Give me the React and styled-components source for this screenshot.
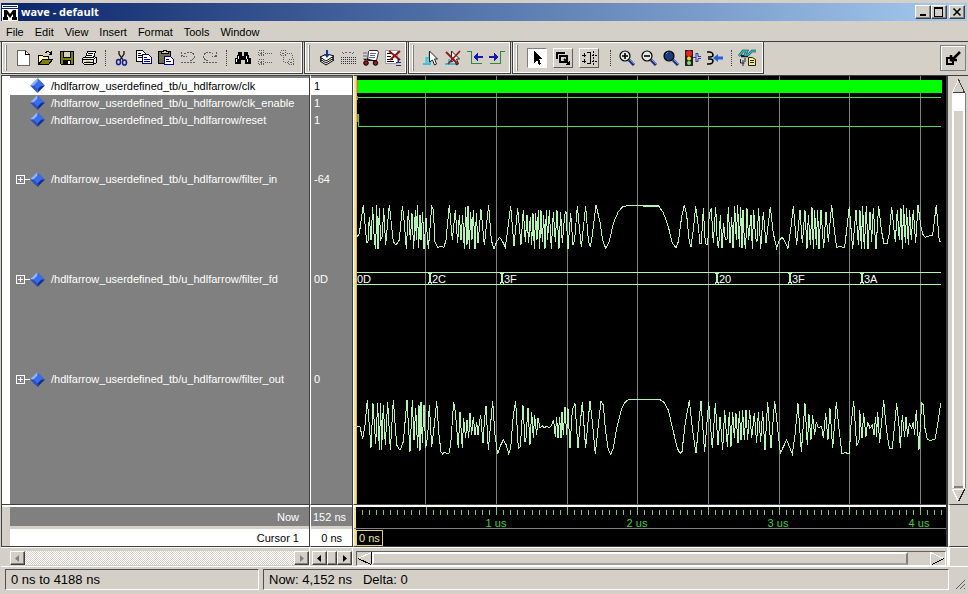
import React, { useState } from 'react'
import styled, { createGlobalStyle } from 'styled-components'

const GlobalStyle = createGlobalStyle`
    * { box-sizing: border-box; }
    body {
        margin: 0;
        background: #d4d0c8;
        font-family: "Liberation Sans", Arial, sans-serif;
        font-size: 12px;
        color: #000;
    }
    button { font: inherit; color: inherit; }
    svg { display: block; }
`;

const Window = styled.div`
    min-height: 100vh;
    display: flex;
    flex-direction: column;
    background: #d4d0c8;
`;

/* ---- title bar and menu ---- */

const TitleBar = styled.header`
    height: 18px;
    margin: 3px 1px 1px 1px;
    padding: 0 2px 0 1px;
    display: flex;
    align-items: center;
    background: linear-gradient(90deg, #0a246a, #a6caf0);
`;

const Title = styled.h1`
    margin: 0 auto 0 3px;
    font-family: "Open Sans", "Noto Sans", sans-serif;
    font-size: 11px;
    line-height: 16px;
    font-weight: 700;
    color: #fff;
`;

const raised = `
    background: #d4d0c8;
    border: 1px solid;
    border-color: #fff #404040 #404040 #fff;
    box-shadow: inset -1px -1px #808080;
`;

const CaptionButton = styled.button`
    ${raised}
    width: 16px;
    height: 14px;
    padding: 0;
    margin-left: ${({ $gap }) => ($gap ? '2px' : '0')};
    display: grid;
    place-items: center;
`;

const MenuBar = styled.nav`
    height: 19px;
    padding-left: 6px;
    display: flex;
    gap: 11px;
`;

const MenuItem = styled.button`
    padding: 0;
    border: 0;
    background: none;
    font-size: 11px;
    line-height: 18px;
`;

/* ---- toolbar ---- */

const Toolbar = styled.div`
    height: 34px;
    padding-left: 1px;
    display: flex;
    border-top: 1px solid #404040;
    border-bottom: 1px solid #d4d0c8;
`;

const ToolGroup = styled.div`
    height: 32px;
    padding: 0 ${({ $end }) => $end || 2}px 0 3px;
    display: flex;
    align-items: center;
    border: 1px solid #404040;
    border-top: 0;
    box-shadow: inset 1px 1px #fff, inset -1px -1px #fff;
    margin-right: 1px;
`;

const Grip = styled.span`
    width: 2px;
    height: 26px;
    margin-right: ${({ $space }) => $space || 5}px;
    border-left: 1px solid #fff;
    border-right: 1px solid #808080;
`;

const Separator = styled.span`
    height: 16px;
    margin: 0 5px;
    border-left: 1px dotted #404040;
`;

const ToolButton = styled.button`
    width: 22px;
    height: 22px;
    padding: 0;
    border: 0;
    background: none;
    display: grid;
    place-items: center;
`;

const ModeButton = styled.button`
    width: 20px;
    height: 20px;
    margin-right: 6px;
    padding: 0;
    display: grid;
    place-items: center;
    background: ${({ $on }) => ($on ? '#fff' : '#d4d0c8')};
    border: 1px solid;
    border-color: ${({ $on }) => ($on ? '#808080 #fff #fff #808080' : '#fff #606060 #606060 #fff')};
`;

const DockButton = styled.button`
    width: 26px;
    height: 26px;
    margin: 3px 2px 0 auto;
    padding: 0;
    display: grid;
    place-items: center;
    background: #d4d0c8;
    border: 1px solid #808080;
    box-shadow: inset 1px 1px #fff;
`;

/* ---- main area ---- */

const Main = styled.main`
    flex: 1;
    display: grid;
    grid-template-columns: 309px 43px 1fr 20px;
    grid-template-rows: 1fr 43px 20px;
    padding-left: 1px;
`;

const Pane = styled.div`
    min-width: 0;
    overflow: hidden;
    display: flex;
    flex-direction: column;
    background: #808080;
    border-top: 1px solid #404040;
    border-right: 1px solid #404040;
    border-left: 1px solid ${({ $first }) => ($first ? '#404040' : '#fff')};
`;

const NamesPane = styled(Pane)`
    border-left: 1px solid #404040;
    box-shadow: inset 8px 0 #fff;
    padding-left: 8px;
`;

const List = styled.ul`
    margin: 0;
    padding: 2px 0 0;
    list-style: none;
`;

const SignalRow = styled.li`
    height: ${({ $tall }) => ($tall ? 100 : 17)}px;
    padding-bottom: ${({ $tall }) => ($tall ? 0 : 2)}px;
    display: flex;
    align-items: center;
    white-space: nowrap;
    font-size: 11px;
    line-height: 12px;
    color: ${({ $selected }) => ($selected ? '#000' : '#fff')};
    background: ${({ $selected }) => ($selected ? '#fff' : 'none')};
`;

const Expander = styled.button`
    width: 15px;
    height: 15px;
    margin-left: 5px;
    padding: 0;
    border: 0;
    background: none;
    visibility: ${({ $show }) => ($show ? 'visible' : 'hidden')};
`;

const SignalName = styled.span`
    margin-left: 6px;
`;

const ValueRow = styled(SignalRow)`
    padding-left: 3px;
`;

const WavePane = styled(Pane)`
    background: #000;
    border-right: 2px solid #404040;
    position: relative;
`;

const CursorLine = styled.div`
    position: absolute;
    left: 0;
    top: 0;
    bottom: 0;
    width: 3px;
    background: #f0e090;
    border-right: 1px solid #d8b850;
`;

const FooterPane = styled(Pane)`
    background: #d4d0c8;
    box-shadow: inset 0 2px #fff;
    padding-top: 2px;
    padding-left: ${({ $first }) => ($first ? 8 : 0)}px;
    border-bottom: 1px solid #404040;
`;

const FooterCell = styled.div`
    height: ${({ $white }) => ($white ? 17 : 19)}px;
    margin-bottom: 3px;
    padding-right: ${({ $tight }) => ($tight ? 6 : 10)}px;
    display: flex;
    flex: none;
    align-items: center;
    justify-content: flex-end;
    white-space: nowrap;
    font-size: 11px;
    color: ${({ $white }) => ($white ? '#000' : '#fff')};
    background: ${({ $white }) => ($white ? '#fff' : '#808080')};
`;

const TimePane = styled(Pane)`
    background: #000;
    border-right: 2px solid #404040;
    border-bottom: 1px solid #404040;
    box-shadow: inset 0 2px #fff, inset 2px 0 #f0e090;
    padding-top: 2px;
`;

const Ruler = styled.svg`
    width: 100%;
    height: 22px;
    flex: none;
    border-bottom: 1px solid #808080;
`;

const CursorRow = styled.div`
    height: 17px;
    padding: 1px 0 0 2px;
    display: flex;
`;

const CursorTime = styled.output`
    height: 16px;
    padding: 0 2px;
    border: 1px solid #e0d070;
    font-size: 11px;
    line-height: 14px;
    color: #f0e8a0;
`;

/* ---- scroll bars ---- */

const ScrollCell = styled.div`
    display: flex;
    align-items: flex-start;
    height: 20px;
    padding: 3px ${({ $right }) => $right || 0}px 0 ${({ $left }) => $left || 0}px;
    border-top: 1px solid #fff;
    border-right: 1px solid #fff;
    border-bottom: 1px solid #fff;
`;

const ScrollButton = styled.button`
    ${raised}
    width: 15px;
    height: 14px;
    flex: none;
    padding: 0;
    display: grid;
    place-items: center;
    color: ${({ disabled }) => (disabled ? '#808080' : '#000')};
`;

const Track = styled.div`
    flex: 1;
    height: 14px;
    background: repeating-conic-gradient(#fff 0 25%, #d4d0c8 0 50%) 0 0 / 2px 2px;
`;

const Thumb = styled.div`
    ${raised}
    flex: 1;
    height: 14px;
`;

const FlatTrack = styled.div`
    flex: 1;
    height: 15px;
    display: flex;
    border: 1px solid #808080;
    border-color: #606060 #fff #fff #606060;
    background: #d4d0c8;
`;

const FlatArrow = styled.button`
    flex: none;
    padding: 0;
    border: 0;
    background: none;
`;

const FlatThumb = styled.div`
    flex: 1;
    margin-right: 22px;
    border: 2px solid;
    border-color: #fff #808080 #a0a0a0 #fff;
`;

const SideScroll = styled.div`
    display: flex;
    flex-direction: column;
    align-items: center;
    padding: 2px 1px 1px 2px;
    border-top: 1px solid #404040;
`;

const SideTrack = styled.div`
    flex: 1;
    width: 14px;
    padding-top: 18px;
    background: #fff;
    display: flex;
    justify-content: center;
    border-right: 1px solid #808080;
`;

const SideThumb = styled.div`
    width: 9px;
    background: #d4d0c8;
    border-bottom: 2px solid #808080;
`;

const SideCell = styled.div`
    border-top: ${({ $line }) => ($line ? '1px solid #404040' : '1px solid #fff')};
    border-bottom: 1px solid ${({ $line }) => ($line ? '#404040' : '#fff')};
    border-left: 2px solid #fff;
`;

/* ---- status bar ---- */

const StatusBar = styled.footer`
    height: 27px;
    padding: 2px 2px 4px 5px;
    display: flex;
    align-items: stretch;
    gap: 4px;
`;

const StatusField = styled.div`
    flex: ${({ $wide }) => ($wide ? '1' : '0 0 254px')};
    padding-left: 5px;
    font-size: 13px;
    line-height: 20px;
    white-space: pre;
    border: 1px solid;
    border-color: #505050 #fff #fff #505050;
`;

/* ---- icons ---- */

const Icon = ({ children, size = 16 }) => (
    <svg width={size} height={size} viewBox={`0 0 ${size} ${size}`} fill="none" stroke="#000" shapeRendering="crispEdges" aria-hidden="true">
        {children}
    </svg>
)

const Lens = ({ fill, children }) => (
    <svg width="16" height="16" viewBox="0 0 16 16" fill="none" aria-hidden="true">
        <path d="M10 10l5 5" stroke="#16307e" strokeWidth="3" />
        <path d="M11 10l4 4" stroke="#7c94dc" />
        <circle cx="6" cy="6" r="5" fill={fill} stroke="#000" strokeWidth="1.2" />
        {children}
    </svg>
)

const icons = {
    new: <Icon><path d="M2.5 .5h8l4 4v11h-12z" fill="#fff" stroke="#666" /><path d="M10.5 .5v4h4" /></Icon>,
    open: (
        <Icon>
            <path d="M1.5 14V5.5h4l1 1h5v3" fill="#ffffa0" />
            <path d="M1.5 14.5l4-5h10l-4 5z" fill="#808000" />
            <path d="M8.5 3c2-3 5-1 5 1m-2 0h3V1" />
        </Icon>
    ),
    save: (
        <Icon>
            <path d="M1.5 1.5h13v13h-12l-1-1z" fill="#808000" />
            <path d="M4.5 1.5h7v6h-7z" fill="#d4d0c8" />
            <path d="M4 10h8v5H4z" fill="#000" stroke="none" />
            <path d="M9 11h2v3H9z" fill="#fff" stroke="none" />
        </Icon>
    ),
    print: (
        <Icon>
            <path d="M1.5 8.5l3-2h8l3 1v5l-3 2h-9l-2-2z" fill="#e8e8e4" />
            <path d="M6.5 1.5h8l-2 6h-8z" fill="#fff" />
            <path d="M7 3.5h5M6 5.5h5M2 9.5h10m0 0l3-2M3 12.5h9M12.5 10v4" />
            <path d="M5 11.5h4" stroke="#c8b800" />
        </Icon>
    ),
    cut: (
        <svg width="16" height="16" viewBox="0 0 16 16" fill="none" aria-hidden="true">
            <path d="M5 1v3l4 6M10 1v3l-4 6" stroke="#111" strokeWidth="1.3" />
            <ellipse cx="4.5" cy="12" rx="2" ry="2.6" stroke="#102090" strokeWidth="1.5" />
            <ellipse cx="10.5" cy="12.5" rx="2" ry="2.6" stroke="#102090" strokeWidth="1.5" />
        </svg>
    ),
    copy: (
        <Icon>
            <path d="M.5 .5h6l3 3v8h-9z" fill="#fff" />
            <path d="M2 3.5h3M2 5.5h5M2 7.5h4" />
            <path d="M6.5 4.5h6l3 3v6h-9z" fill="#fff" stroke="#000080" />
            <path d="M8 7.5h3M8 9.5h6M8 11.5h6" stroke="#000080" />
        </Icon>
    ),
    paste: (
        <Icon>
            <path d="M.5 1.5h12v12H.5z" fill="#707050" />
            <path d="M3.5 3.5v-2h2v-1h3v1h2v2z" fill="#d4d0a0" />
            <path d="M6.5 6.5h6l3 3v5h-9z" fill="#fff" stroke="#000080" />
            <path d="M8 9.5h3M8 11.5h5" stroke="#000080" />
        </Icon>
    ),
    undo: <Icon><path d="M1.5 1.5v5h5M2 6l4-3c3-2 7-1 8 2s-1 5-4 6M1 12.5h14" stroke="#606060" strokeDasharray="2 1" /></Icon>,
    redo: <Icon><path d="M14.5 1.5v5h-5M14 6l-4-3c-3-2-7-1-8 2s1 5 4 6M1 12.5h14" stroke="#606060" strokeDasharray="2 1" /></Icon>,
    find: (
        <Icon>
            <path d="M3 2h4v3H3zM9 2h4v3H9zM2 5h5v4H2zM9 5h5v4H9zM0 8h6v6H0zM10 8h6v6h-6zM6 6h4v4H6z" fill="#000" stroke="none" />
            <path d="M3.5 6v3M1.5 9v3M11.5 6v3M12.5 9v3" stroke="#fff" />
        </Icon>
    ),
    collapse: (
        <Icon>
            <path d="M1.5 .5h5v5h-5zM1.5 9.5h5v5h-5zM8 3.5h8M8 12.5h8" stroke="#606060" strokeDasharray="1 1" />
            <path d="M3 3.5h2M3 12.5h2M4.500 2v3M4.500 11v3" stroke="#606060" />
        </Icon>
    ),
    expand: (
        <Icon>
            <path d="M1.5 .5h5v5h-5zM9.5 9.5h5v5h-5zM8 3.5h5v4M4.5 7v5h4" stroke="#606060" strokeDasharray="1 1" />
            <path d="M3 3.5h2M11 12.5h2" stroke="#606060" />
        </Icon>
    ),
    layers: (
        <svg width="16" height="16" viewBox="0 0 16 16" fill="#fff" stroke="#000" aria-hidden="true">
            <path d="M1 11l7-3 7 2-8 5z" />
            <path d="M1 9l7-3 7 2-8 5z" />
            <path d="M1 7l7-3 7 2-8 5z" />
            <path d="M8 0v6" stroke="#103a90" strokeWidth="2" />
            <path d="M5 4h6L8 8z" fill="#103a90" stroke="none" />
        </svg>
    ),
    grid: (
        <Icon>
            <path d="M1 2l2 2 2-2 2 2 2-2 2 2 2-2 2 2" stroke="#606070" strokeDasharray="1 1" />
            <path d="M0 7.5h16M0 9.5h16M0 11.5h16M0 13.5h16" stroke="#303040" strokeDasharray="1 1" />
        </Icon>
    ),
    run: (
        <svg width="16" height="16" viewBox="0 0 16 16" fill="none" aria-hidden="true">
            <path d="M5.5 1.5l1-1h8l1 2-2 8H4.5z" fill="#fff" stroke="#223" />
            <path d="M7 3.5h6M7 5.5h5M6 7.5h6M0 3h4M0 6h4M0 9h3" stroke="#667" />
            <path d="M1 10l3-1 8 2" stroke="#000" />
            <circle cx="3" cy="13" r="2.3" fill="#a01818" stroke="#000" />
            <circle cx="12.5" cy="13" r="2.3" fill="#a01818" stroke="#000" />
        </svg>
    ),
    stop: (
        <svg width="16" height="16" viewBox="0 0 16 16" fill="none" stroke="#000" aria-hidden="true">
            <path d="M.5 .5h12v13H.5z" fill="#fff" stroke="#99a" />
            <path d="M2 3.500h5M2 6.500h4M2 9.500h6M2 11.500h7" />
            <path d="M4 1l11 9M15 1L5 10" stroke="#8b1010" strokeWidth="2" />
            <path d="M13.500 9v4M11 12.500h5M11 15.500h5" stroke="#203080" />
        </svg>
    ),
    addCursor: (
        <svg width="16" height="16" viewBox="0 0 16 16" fill="none" aria-hidden="true">
            <path d="M0 14h8M3.500 14V8h3M6.500 14V2" stroke="#38c4d8" strokeWidth="2" />
            <path d="M6.500 1v11l3-2 2 5 2-1-2-5h3z" fill="#fff" stroke="#222" />
        </svg>
    ),
    deleteCursor: (
        <svg width="16" height="16" viewBox="0 0 16 16" fill="none" aria-hidden="true">
            <path d="M0 14h12M4 14V9" stroke="#38c4d8" strokeWidth="2" />
            <path d="M6.500 1v11l3-2 2 5 2-1-2-5h3z" fill="#fff" stroke="#222" />
            <path d="M1 2l12 12M15 1L3 14" stroke="#981818" strokeWidth="1.800" />
        </svg>
    ),
    prevEdge: (
        <Icon>
            <path d="M0 1.500h4.500v12H15" stroke="#2c8a3c" />
            <path d="M9 7h7" stroke="#1818b0" strokeWidth="2" />
            <path d="M6 7l5-4v8z" fill="#1818b0" stroke="none" />
        </Icon>
    ),
    nextEdge: (
        <Icon>
            <path d="M1 13.500h10.500v-12H16" stroke="#2c8a3c" />
            <path d="M0 7h6" stroke="#1818b0" strokeWidth="2" />
            <path d="M10 7L5 3v8z" fill="#1818b0" stroke="none" />
        </Icon>
    ),
    zoomIn: <Lens fill="#e8e8e4"><path d="M3 6h6M6 3v6" stroke="#000" strokeWidth="1.6" /></Lens>,
    zoomOut: <Lens fill="#e8e8e4"><path d="M3 6h6" stroke="#000" strokeWidth="1.6" /></Lens>,
    zoomFull: <Lens fill="#1c3a7c"><path d="M3 4l2-2" stroke="#7090d0" /></Lens>,
    light: (
        <svg width="16" height="16" viewBox="0 0 16 16" fill="none" aria-hidden="true">
            <path d="M0 0h8v16H0z" fill="#222" />
            <circle cx="4" cy="3.500" r="3" fill="#f02020" />
            <circle cx="4" cy="8.500" r="2" fill="#f0e020" />
            <circle cx="4" cy="13" r="2" fill="#80e080" />
            <path d="M8 7.500h3M11 3v9M11 3.500h2v3h3M11 11.500h2v-3h3" stroke="#2838a8" />
        </svg>
    ),
    gate: (
        <svg width="16" height="16" viewBox="0 0 16 16" fill="none" aria-hidden="true">
            <path d="M0 2h2c3 0 4 2 4 3s-1 2-3 2H1M1 9h2c2 0 3 1 3 2s-1 3-4 3H0" stroke="#000" strokeWidth="1.600" />
            <path d="M10 8h6" stroke="#2060e0" strokeWidth="3" />
            <path d="M6 8l5-4v8z" fill="#2060e0" />
        </svg>
    ),
    compare: (
        <svg width="20" height="18" viewBox="0 0 20 18" fill="none" aria-hidden="true">
            <path d="M1 7l4-5h4l-2 4h3l4-4h4M3 7h7" stroke="#123" strokeWidth="2.4" />
            <path d="M1 7l4-5h4l-2 4h3l4-4h4" stroke="#30c8c0" strokeWidth="1.4" />
            <path d="M10.500 8.500h4l3 2v6h-7z" fill="#f8f070" stroke="#222" />
            <path d="M12 11.500h4M12 13.500h4M2.500 10v4h4M5 11v6M7 9v4" stroke="#222" />
        </svg>
    ),
}

const PlusBox = () => (
    <Icon size={15}>
        <path d="M1.500 3.500h8v8h-8zM3 7.500h5M5.500 5v5M10 7.500h5" stroke="#fff" />
    </Icon>
)

const Diamond = () => (
    <svg width="15" height="15" viewBox="0 0 15 15" aria-hidden="true">
        <path d="M7.500 0L0 7.500h7.500z" fill="#8cb4f8" />
        <path d="M7.500 0L15 7.500H7.500z" fill="#3c6ce0" />
        <path d="M0 7.500L7.500 15V7.500z" fill="#2850c0" />
        <path d="M15 7.500L7.500 15V7.500z" fill="#12308c" />
        <path d="M7.500 3.500l4 4-4 4-4-4z" fill="#3a6cf0" />
    </svg>
)

const Arrow = ({ dir }) => (
    <svg width="5" height="7" viewBox="0 0 5 7" aria-hidden="true">
        <path d={dir === 'left' ? 'M4 0v7L0 3.500z' : 'M1 0v7l4-3.500z'} fill="currentColor" />
    </svg>
)

/* ---- data ---- */

const toolGroups = [
    [['new', 'open', 'save', 'print'], ['cut', 'copy', 'paste', 'undo', 'redo'], ['find', 'collapse', 'expand']],
    [['layers', 'grid', 'run', 'stop']],
    [['addCursor', 'deleteCursor', 'prevEdge', 'nextEdge']],
]

const signals = [
    { name: 'clk', value: '1' },
    { name: 'clk_enable', value: '1' },
    { name: 'reset', value: '1' },
    { name: 'filter_in', value: '-64', bus: true },
    { name: 'filter_fd', value: '0D', bus: true },
    { name: 'filter_out', value: '0', bus: true },
]

const gridLines = [71, 142, 213, 283, 354, 425, 495, 566]

const busValues = [
    { x: 1, label: '0D' },
    { x: 76, label: '2C' },
    { x: 148, label: '3F' },
    { x: 363, label: '20' },
    { x: 436, label: '3F' },
    { x: 508, label: '3A' },
]

// analog traces, three units to a pixel, in two halves
const filterIn = [
    '45,140 52,140 58,130 70,45 80,158 84,155 88,80 93,150 98,50 103,150 107,178 110,45 114,178 118,55 122,150 127,140 131,55 137,165 148,45 160,155 168,165 178,150 187,48 191,75 199,178 205,60 211,150 216,70 221,178 226,60 229,150 232,45 236,175 240,75 243,150 248,65 252,178 258,85 265,178 275,50 280,60 285,155 293,172 303,170 312,172 318,150 328,45 337,150 346,60 353,160 358,75 363,150 368,75 373,178 377,50 381,165 384,48 388,178 392,65 396,150 400,60 405,178 409,70 414,160 423,58 433,165 446,45 454,150 462,178 470,155 479,142 488,155 496,172 503,120 512,48 522,168 533,55 543,165 550,60 556,155 561,75 566,160 571,80 575,165 579,70 583,178 587,70 591,150 595,60 599,178 603,60 607,155 611,75 615,178 619,60 623,150 628,60 634,178 640,65 646,155 651,60 657,178 662,65 667,160 674,75 678,65 684,178 692,70 699,165 704,150 712,48 724,172 737,48 745,150 751,172 755,150 768,45 780,95 788,150 797,175 808,155 820,100 835,65 848,50 870,46 905,46 908,48 960,49',
    '0,48 55,48 70,68 85,110 97,160 108,173 115,155 125,80 133,45 140,75 148,155 153,170 160,120 167,48 175,110 180,160 184,160 190,55 196,160 203,165 208,70 214,55 220,160 227,50 232,160 236,175 241,75 246,175 251,100 256,150 261,150 265,50 270,160 275,80 279,175 284,48 289,150 293,45 298,170 302,50 306,175 309,60 313,150 317,178 321,55 326,150 333,75 337,178 341,60 347,145 351,155 356,55 362,178 370,65 378,160 391,50 400,130 410,175 418,150 427,142 435,155 444,175 452,120 460,48 470,165 480,60 487,160 495,60 501,178 505,75 511,165 516,50 520,178 524,60 529,165 533,60 537,178 543,60 551,175 558,65 565,155 575,45 583,120 590,172 600,170 614,172 620,120 628,50 638,178 648,60 655,165 660,60 664,178 668,48 673,178 679,48 684,178 690,65 695,155 700,55 708,178 716,48 724,120 732,160 741,162 748,130 755,50 760,100 766,155 772,60 778,150 783,55 787,178 791,45 796,160 800,55 805,165 809,60 814,150 820,60 827,160 834,45 843,110 848,132 856,142 868,138 878,135 889,45 898,155 902,153',
]

const filterOut = [
    '45,125 60,125 68,163 75,120 82,45 93,188 99,55 107,178 113,55 118,195 122,55 125,195 130,60 136,180 143,50 151,195 160,45 170,180 180,196 190,170 201,45 210,200 217,45 222,165 227,70 233,190 237,60 240,198 243,50 247,175 252,60 257,190 263,155 268,60 275,185 283,120 290,48 297,150 303,200 308,207 313,202 320,205 327,205 332,180 341,50 346,80 355,190 360,80 367,190 371,100 377,160 381,105 386,160 390,85 395,150 400,95 405,150 410,110 414,150 418,115 422,90 429,175 433,110 438,62 445,195 458,48 465,150 473,208 480,185 490,165 498,178 506,205 512,190 520,90 527,48 535,190 541,185 549,60 555,170 558,160 564,68 570,180 575,80 580,160 584,90 590,150 594,100 600,130 607,122 613,128 620,124 628,128 635,120 641,105 646,155 650,95 654,160 659,95 663,160 666,80 670,150 675,65 680,150 684,70 690,190 697,75 705,55 714,190 727,50 737,190 750,48 757,110 766,208 775,120 783,48 790,60 797,140 805,195 812,208 820,190 830,130 845,70 855,52 865,44 880,43 960,43',
    '0,43 58,43 72,52 85,75 100,140 112,190 120,205 126,200 135,120 148,45 157,130 168,205 176,120 183,48 190,150 194,200 206,50 217,190 226,55 234,180 240,95 248,195 254,75 262,185 268,80 273,185 278,80 283,160 288,85 294,175 298,78 303,165 308,75 313,165 318,75 323,165 329,75 335,160 343,85 350,175 355,80 362,170 368,78 375,195 383,50 393,190 404,48 412,120 421,205 428,190 440,165 448,185 457,207 465,150 474,55 484,200 495,55 502,180 507,88 513,165 518,90 524,150 529,110 535,128 545,124 550,160 557,85 564,165 570,70 578,190 589,52 598,140 606,207 615,203 628,206 633,120 641,48 650,180 657,170 659,75 666,160 671,85 678,155 683,110 690,130 697,120 702,150 707,95 710,155 713,80 719,175 731,45 739,130 748,190 757,190 765,110 770,55 777,120 781,190 787,90 794,155 798,95 803,155 808,115 815,130 820,110 824,150 829,75 837,195 845,55 850,60 855,130 862,163 870,166 885,163 893,120 902,55',
]

const Trace = ({ halves, top }) => halves.map((points, i) => (
    <g key={i} transform={`translate(${i * 300 - 14} ${top}) scale(0.3333)`}>
        <polyline points={points} vectorEffect="non-scaling-stroke" />
    </g>
))

const Waves = () => (
    <svg width="100%" height="428" fill="none" stroke="#b4f4b4" shapeRendering="crispEdges">
        {gridLines.map(x => <path key={x} d={`M${x}.5 0v428`} stroke="#808080" />)}
        <path d="M3 4h585v13H3z" fill="#00ff00" stroke="none" />
        <path d="M2 21.500h585" stroke="#50d850" />
        <path d="M2 38.500h2.500v12H587" stroke="#50d850" />
        <path d="M3.500 4v13M3.500 20v4M3.500 38v8" stroke="#c07830" />
        <Trace halves={filterIn} top={114} />
        <path d="M3 196.500h584M3 208.500h584" />
        {busValues.map(({ x, label }) => (
            <g key={x}>
                <path d={`M${x - 2}.5 196l2 6-2 6M${x + 1}.5 196l-2 6 2 6`} />
                <text x={x + 2} y="207" fill="#fff" stroke="none" fontSize="11">{label}</text>
            </g>
        ))}
        <Trace halves={filterOut} top={309} />
    </svg>
)

const ticks = Array.from({ length: 83 }, (_, i) => i + 1)

const TimeRuler = () => (
    <Ruler stroke="#70c870" shapeRendering="crispEdges">
        {ticks.map(i => (
            <path key={i} d={`M${Math.round(i * 7.06 + 1)}.5 ${i % 10 ? '3v5' : '0v8'}`} />
        ))}
        {['1 us', '2 us', '3 us', '4 us'].map((t, i) => (
            <text key={t} x={142 + i * 141} y="20" textAnchor="middle" fill="#40d040" stroke="none" fontSize="11">{t}</text>
        ))}
    </Ruler>
)

const App = () => {
    const [selected, setSelected] = useState('clk')
    const [mode, setMode] = useState('select')

    return (
        <Window>
            <GlobalStyle />
            <TitleBar>
                <svg width="16" height="17" viewBox="0 0 16 17" aria-hidden="true">
                    <path d="M0 1h16v3H0zM0 5h16v12H0z" fill="#fff" />
                    <path d="M1 2h14v1H1z" fill="#0a246a" />
                    <path d="M2 6h3l3 4 3-4h3v7h1v3h-5v-3h1v-3l-3 4-3-4v3h1v3H1v-3h1z" fill="#000" />
                </svg>
                <Title>wave - default</Title>
                <CaptionButton aria-label="Minimize">
                    <Icon size={10}><path d="M2 8h6" strokeWidth="2" /></Icon>
                </CaptionButton>
                <CaptionButton aria-label="Maximize">
                    <Icon size={10}><path d="M.5 1v8.500h8V1" /><path d="M0 1h9" strokeWidth="2" /></Icon>
                </CaptionButton>
                <CaptionButton aria-label="Close" $gap>
                    <svg width="10" height="10" aria-hidden="true"><path d="M1.500 1.500l7 7M8.500 1.500l-7 7" stroke="#000" strokeWidth="1.600" /></svg>
                </CaptionButton>
            </TitleBar>
            <MenuBar>
                {['File', 'Edit', 'View', 'Insert', 'Format', 'Tools', 'Window'].map(m => <MenuItem key={m}>{m}</MenuItem>)}
            </MenuBar>

            <Toolbar>
                {toolGroups.map((group, g) => (
                    <ToolGroup key={g} $end={g ? 2 : 4}>
                        <Grip $space={g ? 6 : 5} />
                        {group.map((part, p) => (
                            <React.Fragment key={p}>
                                {p > 0 && <Separator />}
                                {part.map(id => <ToolButton key={id} aria-label={id}>{icons[id]}</ToolButton>)}
                            </React.Fragment>
                        ))}
                    </ToolGroup>
                ))}
                <ToolGroup $end={4}>
                    <Grip $space={9} />
                    <ModeButton $on={mode === 'select'} onClick={() => setMode('select')} aria-label="select mode">
                        <Icon><path d="M5 1v12l3-3 2 5 2-1-2-5h4z" fill="#000" stroke="none" /></Icon>
                    </ModeButton>
                    <ModeButton $on={mode === 'zoom'} onClick={() => setMode('zoom')} aria-label="zoom mode">
                        <Icon>
                            <path d="M2 9V3h8M5 6h7v6H5z" strokeWidth="2" />
                            <path d="M9 9l5 5" strokeWidth="2" shapeRendering="auto" />
                            <path d="M15 10v5h-5z" fill="#000" stroke="none" />
                        </Icon>
                    </ModeButton>
                    <ModeButton $on={mode === 'edit'} onClick={() => setMode('edit')} aria-label="edit mode">
                        <Icon>
                            <path d="M1 5.500h4M3.500 3v4M1 11.500h4M3.500 9v4M6 2.500h3.500v11H6" />
                            <path d="M12.500 1v14M11 5.500h5M11 11.500h5" strokeDasharray="2 1" />
                        </Icon>
                    </ModeButton>
                    <Separator />
                    {['zoomIn', 'zoomOut', 'zoomFull', 'light', 'gate'].map(id => (
                        <ToolButton key={id} aria-label={id}>{icons[id]}</ToolButton>
                    ))}
                    <Separator />
                    <ToolButton aria-label="compare">{icons.compare}</ToolButton>
                </ToolGroup>
                <DockButton aria-label="Dock">
                    <Icon>
                        <path d="M2 8h6v6H2z" strokeWidth="2" />
                        <path d="M15 2L6 11M6 5v5h6" strokeWidth="2.500" shapeRendering="auto" />
                    </Icon>
                </DockButton>
            </Toolbar>

            <Main>
                <NamesPane>
                    <List>
                        {signals.map(({ name, bus }) => (
                            <SignalRow key={name} $tall={bus} $selected={selected === name} onClick={() => setSelected(name)}>
                                <Expander $show={bus} aria-label={`expand ${name}`}><PlusBox /></Expander>
                                <Diamond />
                                <SignalName>/hdlfarrow_userdefined_tb/u_hdlfarrow/{name}</SignalName>
                            </SignalRow>
                        ))}
                    </List>
                </NamesPane>
                <Pane>
                    <List>
                        {signals.map(({ name, value, bus }) => (
                            <ValueRow key={name} $tall={bus} $selected={selected === name}>{value}</ValueRow>
                        ))}
                    </List>
                </Pane>
                <WavePane>
                    <Waves />
                    <CursorLine />
                </WavePane>
                <SideScroll>
                    <FlatArrow aria-label="scroll up">
                        <Icon size={15}><path d="M1.500 14.500l6-13" stroke="#fff" /><path d="M7.500 1.500l6 13h-12" stroke="#404040" /></Icon>
                    </FlatArrow>
                    <SideTrack><SideThumb /></SideTrack>
                    <FlatArrow aria-label="scroll down">
                        <Icon size={15}><path d="M13.500 1.500h-12l6 12" stroke="#fff" /><path d="M13.500 1.500l-6 12" stroke="#202020" /></Icon>
                    </FlatArrow>
                </SideScroll>

                <FooterPane $first>
                    <FooterCell>Now</FooterCell>
                    <FooterCell $white>Cursor 1</FooterCell>
                </FooterPane>
                <FooterPane>
                    <FooterCell $tight>152 ns</FooterCell>
                    <FooterCell $white>0 ns</FooterCell>
                </FooterPane>
                <TimePane>
                    <TimeRuler />
                    <CursorRow><CursorTime>0 ns</CursorTime></CursorRow>
                </TimePane>
                <SideCell $line />

                <ScrollCell $left={9}>
                    <ScrollButton disabled aria-label="names left"><Arrow dir="left" /></ScrollButton>
                    <Track />
                    <ScrollButton disabled aria-label="names right"><Arrow dir="right" /></ScrollButton>
                </ScrollCell>
                <ScrollCell $left={2}>
                    <ScrollButton aria-label="values left"><Arrow dir="left" /></ScrollButton>
                    <Thumb />
                    <ScrollButton aria-label="values right"><Arrow dir="right" /></ScrollButton>
                </ScrollCell>
                <ScrollCell $left={3} $right={1}>
                    <FlatTrack>
                        <FlatArrow aria-label="waves left">
                            <Icon size={15}><path d="M14.500 0v12" /><path d="M1 6.500l13-6" stroke="#fff" /><path d="M1 6.500l13 6" /></Icon>
                        </FlatArrow>
                        <FlatThumb />
                        <FlatArrow aria-label="waves right">
                            <Icon size={15}><path d="M.5 13V.5l13 6" stroke="#fff" /><path d="M2 12.500l12-6" /></Icon>
                        </FlatArrow>
                    </FlatTrack>
                </ScrollCell>
                <SideCell />
            </Main>

            <StatusBar>
                <StatusField>0 ns to 4188 ns</StatusField>
                <StatusField $wide>Now: 4,152 ns   Delta: 0</StatusField>
                <svg width="13" height="21" viewBox="0 0 13 21" stroke="#606060" aria-hidden="true">
                    <path d="M3 20l9-9M7 20l5-5M11 20l1-1" />
                </svg>
            </StatusBar>
        </Window>
    )
}

export default App
